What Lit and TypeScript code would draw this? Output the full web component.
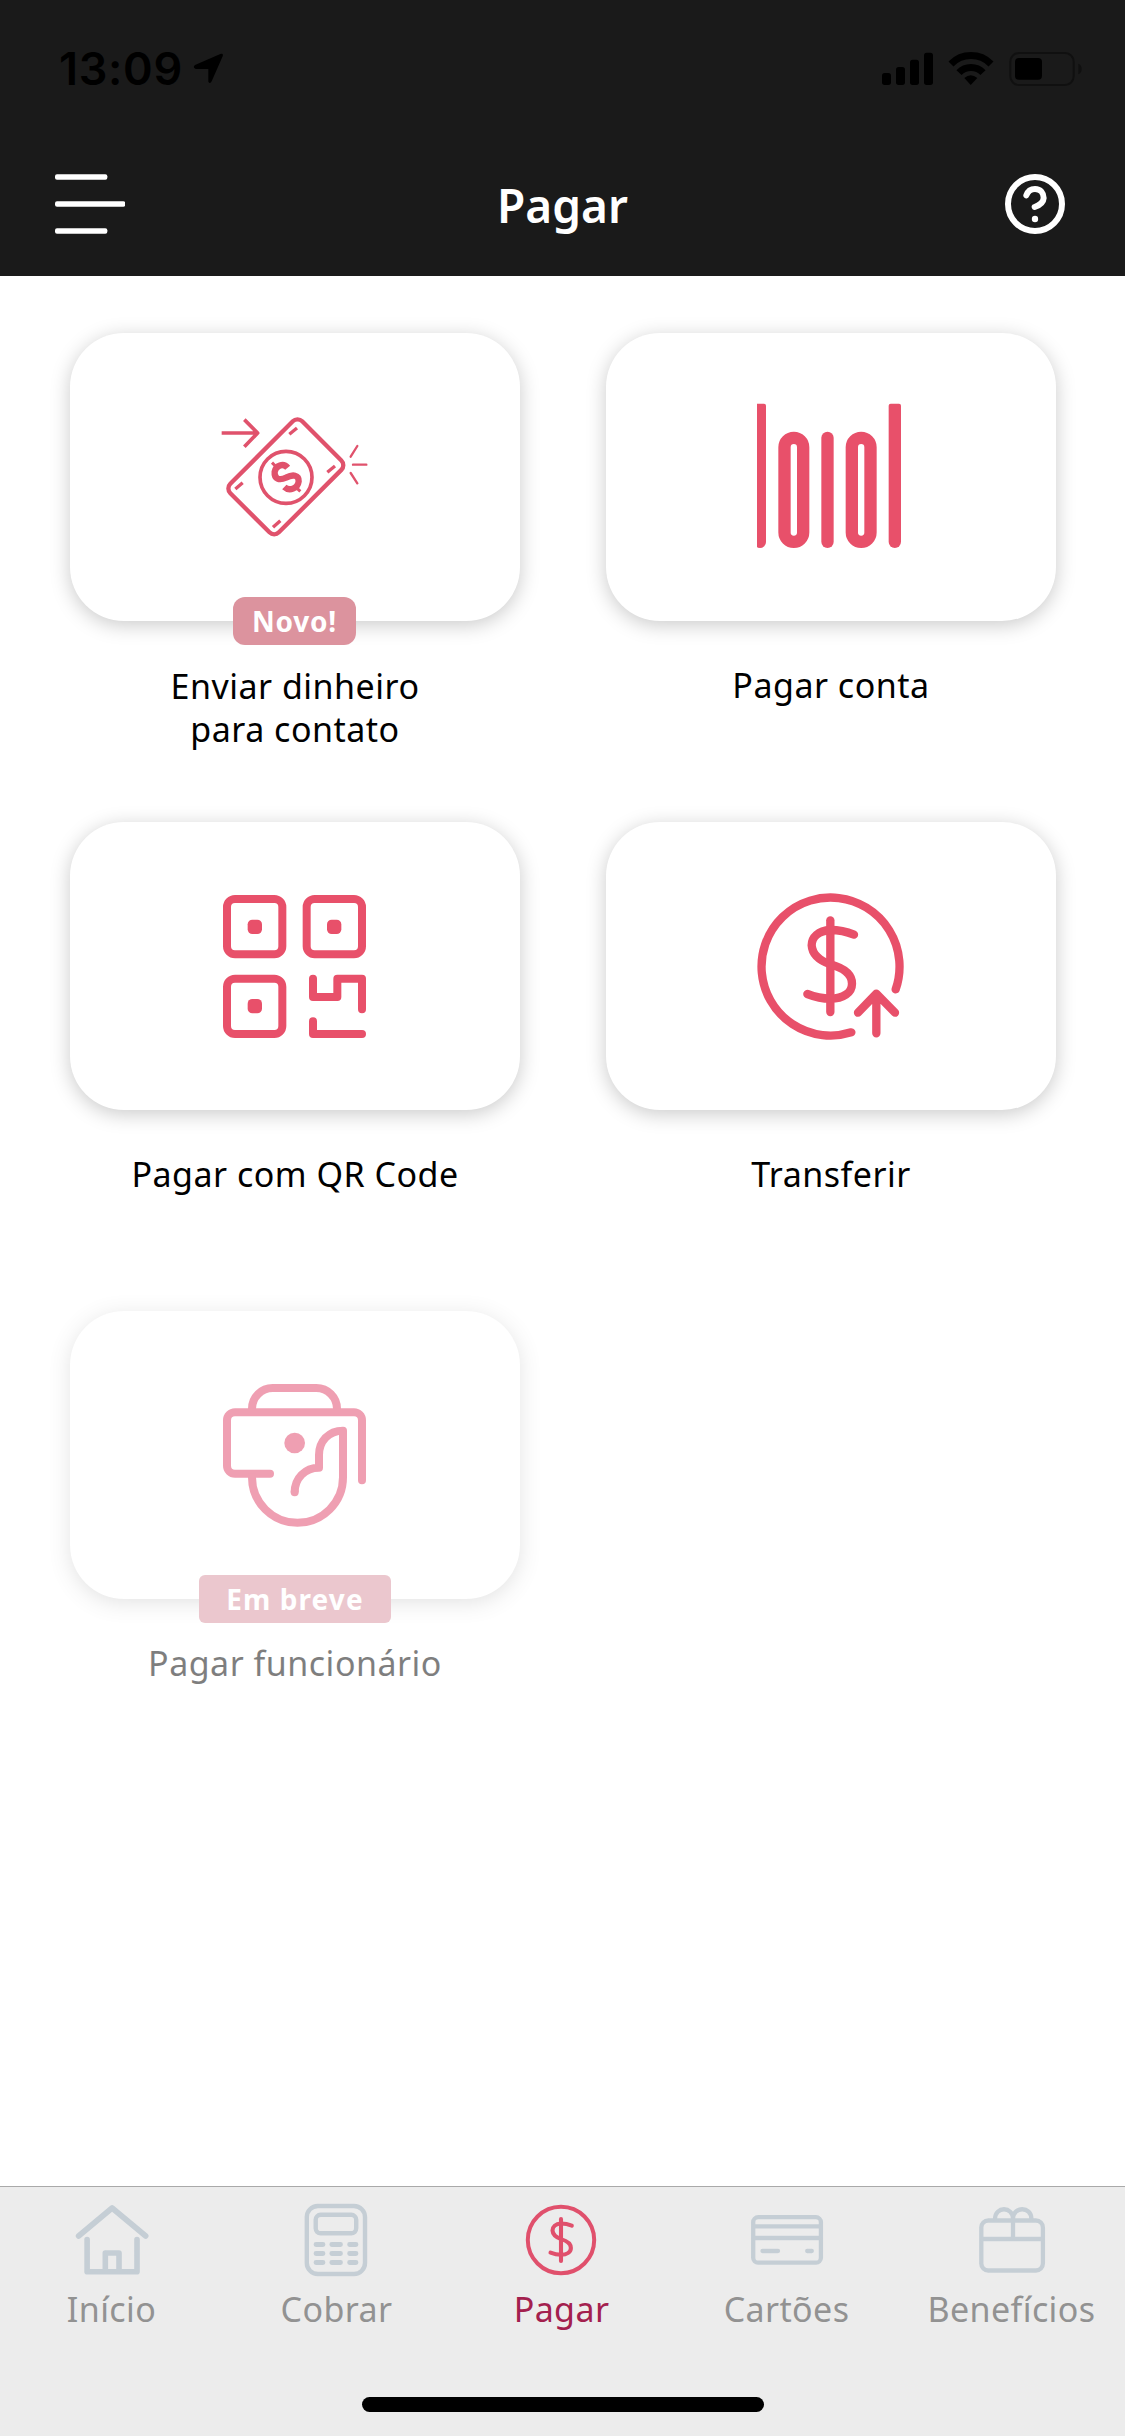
import { LitElement, html, svg, css } from "lit";
import { customElement, property } from "lit/decorators.js";
import { classMap } from "lit/directives/class-map.js";

/* Dollar sign shared by the transfer tile and the active tab. */
const dollar = svg`
  <path d="M301 151V426" />
  <path d="M372 194C345 183 322 180 301 180C265 182 245 202 245 226C247 258 275 274 301 283C340 294 366 312 366 341C366 368 340 386 301 386C277 386 255 381 232 372" />`;

const tileIcons = {
  money: svg`
    <g stroke-width="13" stroke-linecap="butt">
      <rect x="135" y="187.500" width="305" height="206" rx="20" transform="rotate(-45 287.500 290.500)" />
      <circle cx="288" cy="292" r="78" stroke-width="11" />
      <path stroke-width="19" stroke-linecap="butt" d="M293 263C280 247 257 257 254 275C252 297 268 302 288 293C309 282 327 285 326 304C323 326 298 335 283 321" />
      <path stroke-width="9" d="M246 248L259 261M318 322L331 334" />
      <path stroke-width="10" d="M298 163L321 144M412 277L435 258M136 327L158 308M249 442L271 422" />
      <path stroke-width="11" stroke-linejoin="round" d="M95 159H200M163 119L203 159L163 200" />
      <path stroke-width="7" stroke-linecap="round" d="M482 230L502 198M489 254H529M482 279L502 310" />
    </g>`,
  barcode: svg`
    <g class="solid">
      <path d="M81 71H102Q108 71 108 77V486A18 18 0 0 1 90 504Q81 504 81 500Z" />
      <rect x="274" y="155" width="37" height="349" rx="18.500" />
      <path d="M476 77Q476 71 482 71H507Q513 71 513 77V485.500A18.500 18.500 0 0 1 476 485.500Z" />
    </g>
    <g stroke-width="37">
      <rect x="163.500" y="173.500" width="56" height="312" rx="28" />
      <rect x="365.500" y="173.500" width="56" height="312" rx="28" />
    </g>`,
  qr: svg`
    <g stroke-width="24">
      <rect x="111" y="87" width="166" height="166" rx="24" />
      <rect x="350" y="87" width="166" height="166" rx="24" />
      <rect x="111" y="326" width="166" height="166" rx="24" />
      <path d="M369 326V381H442V326H516V418M369 454V492H516" />
    </g>
    <g class="solid">
      <rect x="173" y="149" width="43" height="43" rx="14" />
      <rect x="411" y="149" width="43" height="43" rx="14" />
      <rect x="173" y="387" width="43" height="43" rx="14" />
    </g>`,
  transfer: svg`
    <g stroke-width="25">
      ${dollar}
      <path d="M497 358A207 207 0 1 0 364 487" />
      <path d="M439 490V371M384 428L439 371L495 428" />
    </g>`,
  employee: svg`
    <g stroke-width="24">
      <path stroke-linecap="butt" d="M186 158V146A62 62 0 0 1 248 84H379A62 62 0 0 1 441 146V158" />
      <path d="M240 341H135A24 24 0 0 1 111 317V181A24 24 0 0 1 135 157H492A24 24 0 0 1 516 181V361" />
      <path stroke-linecap="butt" d="M186 341V352A136.500 136.500 0 0 0 459 352V212C415 212 387 245 387 285V323C345 323 314 355 314 397" />
      <path d="M314 396V397" />
    </g>
    <circle class="solid" cx="314" cy="249" r="31" />`,
};

const tabIcons = {
  home: svg`
    <path stroke-width="5.600" d="M78.600 66L112.100 38L145.700 66M87.100 69.500V101.700H137V69.500M105.300 101V83H119V101" />`,
  calculator: svg`
    <g stroke-width="4.400">
      <rect x="81.800" y="36" width="58.200" height="68" rx="11" />
      <rect x="90.700" y="44.800" width="40.500" height="18.500" rx="5" />
      <path stroke-width="4.800" d="M91 74.500H98M106.800 74.500H115.500M124.600 74.500H131M91 83.500H98M106.800 83.500H115.500M124.600 83.500H131M91 92.500H98M106.800 92.500H115.500M124.600 92.500H131" />
    </g>`,
  coin: svg`
    <circle cx="111" cy="70" r="33.200" stroke-width="4" />
    <g transform="translate(111 69.900) scale(.152) translate(-301 -288)" stroke-width="27">${dollar}</g>`,
  card: svg`
    <g stroke-width="4.300">
      <rect x="78.200" y="47.200" width="67.700" height="45.500" rx="5" />
      <path d="M79 56.300H145M79 68H145M87.500 81H103M132.200 81H136.800" />
    </g>`,
  gift: svg`
    <g stroke-width="4.300">
      <rect x="81.300" y="50.500" width="61.600" height="50" rx="7" />
      <path d="M82 69H142M113 48V69M95 49C95 36 113 36 113 49C113 36 131.400 36 131.400 49" />
    </g>`,
};

interface Tile {
  icon: keyof typeof tileIcons;
  box: string;
  lines: string[];
  badge?: string;
  soon?: boolean;
}

const tiles: Tile[] = [
  { icon: "money", box: "-360 -141 1350 864", lines: ["Enviar dinheiro", "para contato"], badge: "Novo!" },
  { icon: "barcode", box: "-372 -141 1350 864", lines: ["Pagar conta"] },
  { icon: "qr", box: "-360 -144 1350 864", lines: ["Pagar com QR Code"] },
  { icon: "transfer", box: "-372 -144 1350 864", lines: ["Transferir"] },
  { icon: "employee", box: "-360 -147 1350 864", lines: ["Pagar funcionário"], badge: "Em breve", soon: true },
];

const tabs: { icon: keyof typeof tabIcons; label: string; active?: boolean }[] = [
  { icon: "home", label: "Início" },
  { icon: "calculator", label: "Cobrar" },
  { icon: "coin", label: "Pagar", active: true },
  { icon: "card", label: "Cartões" },
  { icon: "gift", label: "Benefícios" },
];

@customElement("status-bar")
class StatusBar extends LitElement {
  static styles = css`
    :host { display: flex; align-items: center; justify-content: space-between; height: 138px; padding: 0 42px 0 59px; box-sizing: border-box; }
    .left { display: flex; align-items: center; gap: 10px; }
    .time { font: 600 45px/54px Inter, sans-serif; color: #000; letter-spacing: 0.7px; }
  `;
  render() {
    return html`
      <div class="left">
        <span class="time">13:09</span>
        <svg width="32" height="32" viewBox="574 160 96 96"><path d="M580 196L656 163Q666 160 663 170L630 245Q625 254 620 246V208H582Q572 204 580 196Z" /></svg>
      </div>
      <svg width="202" height="36" viewBox="393 153 606 108">
        <rect x="396" y="219" width="27" height="36" rx="8" />
        <rect x="438" y="201" width="27" height="54" rx="8" />
        <rect x="480" y="179" width="27" height="76" rx="8" />
        <rect x="522" y="158" width="27" height="97" rx="8" />
        <path fill="none" stroke="#000" stroke-width="21" d="M603 192A84 84 0 0 1 723 192M627 218A49 49 0 0 1 699 218" />
        <path d="M643 234Q662 217 682 234L662 255Z" />
        <rect x="781" y="159" width="190" height="96" rx="26" fill="none" stroke="#101010" stroke-width="6" />
        <rect x="795" y="174" width="81" height="65" rx="12" />
        <path fill="#101010" d="M985 191Q995 195 995 207T985 223Z" />
      </svg>`;
  }
}

@customElement("title-bar")
class TitleBar extends LitElement {
  static styles = css`
    :host { display: flex; align-items: center; justify-content: space-between; height: 138px; padding: 0 60px 6px 55px; box-sizing: border-box; }
    .title { margin: 0; font: 600 46px/60px "Noto Sans", sans-serif; color: #fff; padding: 1px 5px 0 0; }
    .menu { fill: #fff; }
    .help { fill: none; stroke: #fff; stroke-linecap: round; }
  `;
  render() {
    return html`
      <svg class="menu" width="70" height="60" viewBox="165 522 210 180">
        <rect x="165" y="523" width="157" height="16" rx="6" />
        <rect x="165" y="604" width="211" height="16" rx="6" />
        <rect x="165" y="685" width="157" height="16" rx="6" />
      </svg>
      <h1 class="title">Pagar</h1>
      <svg class="help" width="60" height="60" viewBox="765 522 180 180" stroke-width="18">
        <circle cx="855" cy="612" r="81" />
        <path d="M829 586C834 572 844 567 855 567C872 567 881 580 881 594C880 610 868 616 854 621" />
        <path stroke-width="19" d="M855 657V657.100" />
      </svg>`;
  }
}

@customElement("pay-tile")
class PayTile extends LitElement {
  @property({ attribute: false }) tile!: Tile;
  static styles = css`
    :host { display: block; }
    .tile { position: relative; display: flex; flex-direction: column; align-items: center; }
    .soon { opacity: 0.5; }
    .card { width: 450px; height: 288px; border-radius: 54px; background: #fff; box-shadow: 0 4px 20px rgba(0, 0, 0, 0.21); }
    .icon { display: block; width: 450px; height: 288px; fill: none; stroke: #e8506a; stroke-linecap: round; stroke-linejoin: round; }
    .money { stroke: #e0526c; }
    .icon .solid { fill: #e8506a; stroke: none; }
    .soon .icon { stroke: #e14167; }
    .soon .icon .solid { fill: #e14167; }
    .badge { position: absolute; top: 264px; left: 163px; width: 123px; height: 48px; border-radius: 12px; background: #dc939e; color: #fff; font: 700 28px/49px "Noto Sans", sans-serif; letter-spacing: 0.8px; text-align: center; }
    .soon .badge { left: 129px; width: 192px; border-radius: 6px; background: #d8919e; letter-spacing: 1.1px; }
    .label { margin-top: 43px; font: 370 34px/43px "Noto Sans", sans-serif; letter-spacing: 0.5px; color: #000; text-align: center; white-space: nowrap; }
    .two { margin-top: 44px; }
    .line { display: block; }
  `;
  render() {
    const t = this.tile;
    return html`
      <div class=${classMap({ tile: true, soon: !!t.soon })}>
        <div class="card">
          <svg class="icon ${t.icon}" viewBox=${t.box}>${tileIcons[t.icon]}</svg>
        </div>
        ${t.badge ? html`<span class="badge">${t.badge}</span>` : ""}
        <div class=${classMap({ label: true, two: t.lines.length > 1 })}>${t.lines.map((l) => html`<span class="line">${l}</span>`)}</div>
      </div>`;
  }
}

@customElement("tab-bar")
class TabBar extends LitElement {
  static styles = css`
    :host { display: flex; flex-direction: column; align-items: center; height: 250px; box-sizing: border-box; border-top: 1px solid #a9a9a9; background: #ececec; }
    .tabs { display: grid; grid-template-columns: repeat(5, 225px); height: 210px; }
    .tab { display: flex; flex-direction: column; align-items: center; padding-top: 13px; }
    .icon { width: 225px; height: 84px; fill: none; stroke: #c5ced5; stroke-linecap: round; stroke-linejoin: round; }
    .label { margin: 4px 2px 0 0; font: 370 34px/43px "Noto Sans", sans-serif; letter-spacing: 0.4px; color: #929292; white-space: nowrap; }
    .active .icon { stroke: #e0506c; }
    .active .label { color: #a3204e; font-weight: 400; }
    .indicator { width: 402px; height: 15px; border-radius: 8px; background: #000; }
  `;
  render() {
    return html`
      <nav class="tabs">
        ${tabs.map(
          (t) => html`
            <div class=${classMap({ tab: true, active: !!t.active })}>
              <svg class="icon" viewBox="0 30 225 84">${tabIcons[t.icon]}</svg>
              <span class="label">${t.label}</span>
            </div>`
        )}
      </nav>
      <div class="indicator"></div>`;
  }
}

@customElement("app-root")
class AppRoot extends LitElement {
  static styles = css`
    :host { display: flex; flex-direction: column; width: 1125px; height: 2436px; background: #fff; overflow: hidden; }
    .header { background: #1a1a1a; height: 276px; }
    .grid { flex: 1; display: grid; grid-template-columns: 450px 450px; grid-auto-rows: 489px; column-gap: 86px; padding: 57px 69px 0 70px; }
  `;
  render() {
    return html`
      <header class="header">
        <status-bar></status-bar>
        <title-bar></title-bar>
      </header>
      <main class="grid">${tiles.map((t) => html`<pay-tile .tile=${t}></pay-tile>`)}</main>
      <tab-bar></tab-bar>`;
  }
}
